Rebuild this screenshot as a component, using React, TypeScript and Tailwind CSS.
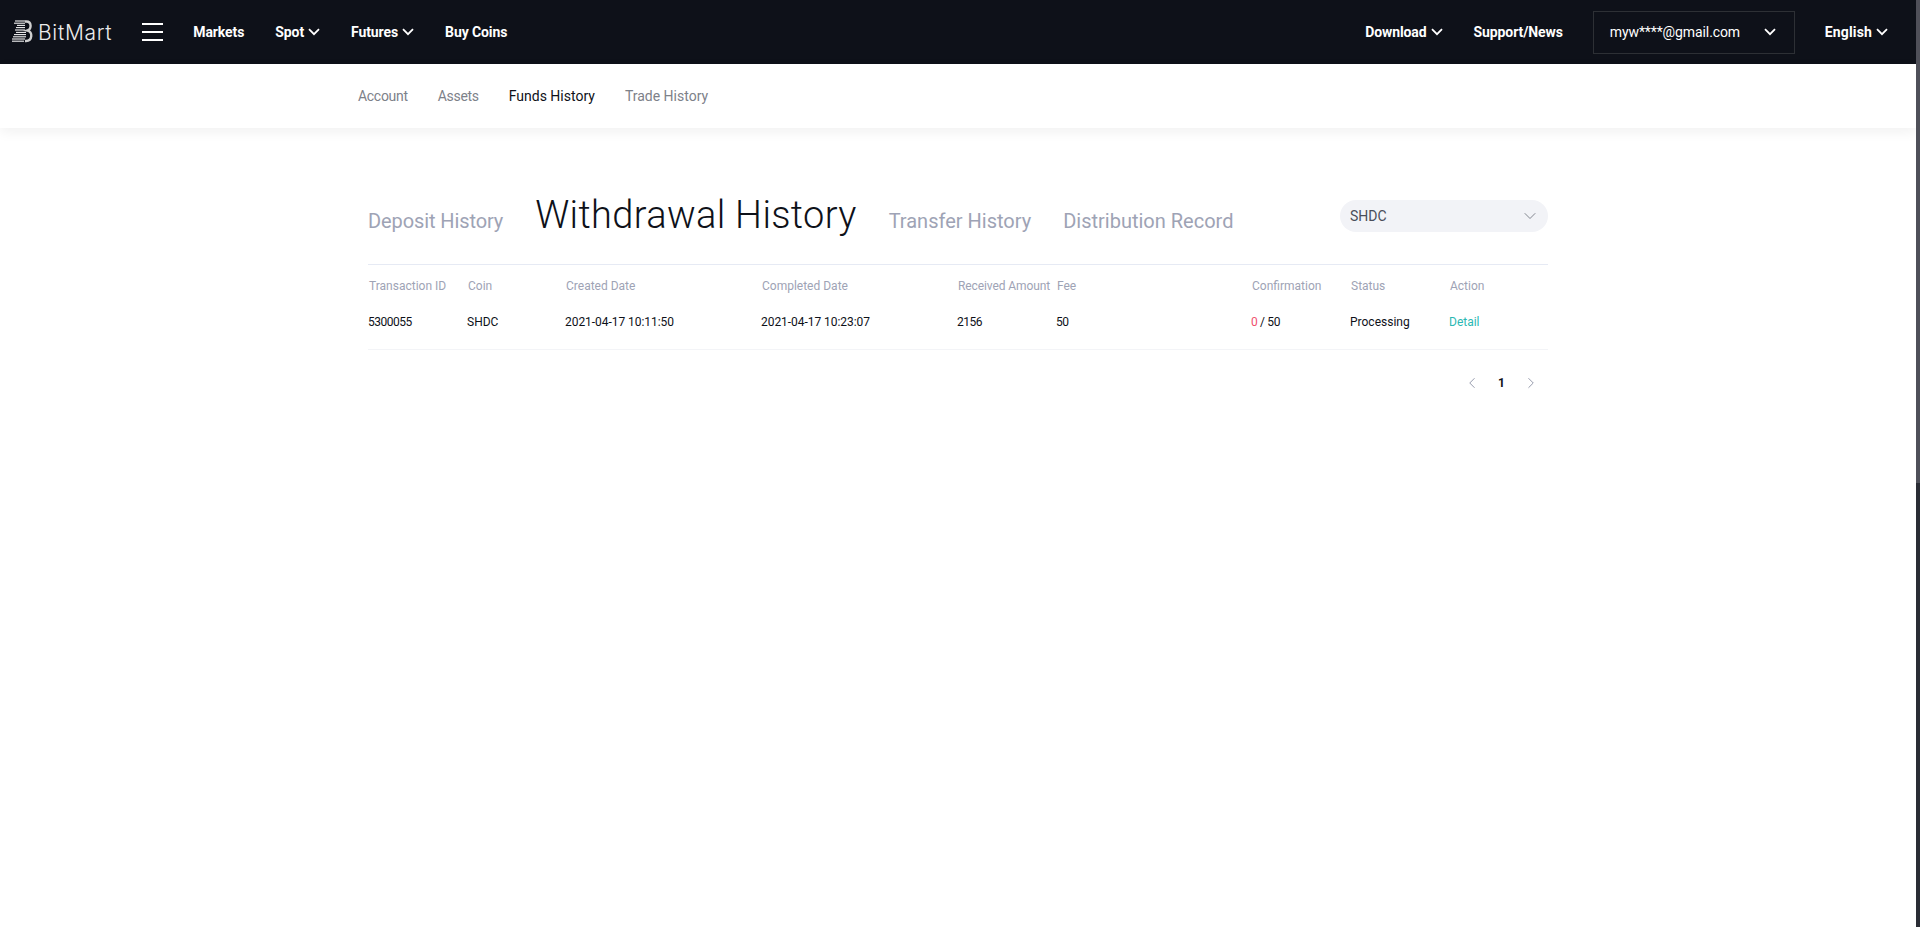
import React from "react";
import { ChevronDown, ChevronLeft, ChevronRight } from "lucide-react";

const Logo = () => (
  <svg width="22" height="24" viewBox="0 0 22 24" fill="none" className="shrink-0">
    <g stroke="#f2f2f2" strokeWidth="1.1">
      <path d="M3 1h10" />
      <path d="M2 3.200h11" />
      <path d="M5 5.400h8" />
      <path d="M4 7.600h9" />
      <path d="M3 10h10" />
      <path d="M4 12.400h10" />
      <path d="M2 14.600h12" />
      <path d="M1 16.800h13" />
      <path d="M0 19h13" />
      <path d="M0 21.200h12" />
    </g>
    <path d="M13 1.500h1.500c5 0 5.500 7.500 1 9c5.500 1.200 5 10.500-1.500 10.500h-1" stroke="#cfcfcf" strokeWidth="2.400" />
  </svg>
);

const Chevron = () => (
  <svg width="12" height="8" viewBox="0 0 12 8" fill="none" className="shrink-0">
    <path d="M1 1.200l5 5l5-5" stroke="#ffffff" strokeWidth="1.800" />
  </svg>
);

const NavItem = ({ label, chevron, t }: { label: string; chevron?: boolean; t?: string }) => (
  <span className={`flex items-center gap-[4px] text-[14px] font-bold text-white whitespace-nowrap ${t ?? "tracking-[-0.1px]"}`}>
    {label}
    {chevron && <Chevron />}
  </span>
);

const cols = [
  { w: "w-[99px]", h: "Transaction ID", v: "5300055", t: "tracking-[-0.5px]" },
  { w: "w-[98px]", h: "Coin", v: "SHDC", t: "" },
  { w: "w-[196px]", h: "Created Date", v: "2021-04-17 10:11:50", t: "tracking-[-0.05px]" },
  { w: "w-[196px]", h: "Completed Date", v: "2021-04-17 10:23:07", t: "tracking-[-0.05px]" },
  { w: "w-[99px]", h: "Received Amount", v: "2156", t: "tracking-[-0.5px]" },
  { w: "w-[195px]", h: "Fee", v: "50", t: "tracking-[-0.5px]" },
  { w: "w-[99px]", h: "Confirmation", v: "", t: "tracking-[-0.35px]" },
  { w: "w-[99px]", h: "Status", v: "Processing", t: "" },
  { w: "w-[99px]", h: "Action", v: "", t: "" },
];

export default function App() {
  return (
    <div className="flex h-[927px] overflow-hidden bg-white font-['Roboto','Liberation_Sans',sans-serif]">
      <div className="flex-1 min-w-0">
        <header className="h-16 bg-[#0e1119] flex items-center justify-between pl-3 pr-[28px]">
          <div className="flex items-center">
            <div className="flex items-center gap-[4px]">
              <Logo />
              <span className="text-[21px] font-light font-['Inter',sans-serif] text-[#ececec] leading-none tracking-[0.7px]">BitMart</span>
            </div>
            <div className="ml-[30px] w-[21px] flex flex-col gap-[6px]">
              <span className="h-[2px] bg-white" />
              <span className="h-[2px] bg-white" />
              <span className="h-[2px] bg-white" />
            </div>
            <div className="ml-[30px] flex items-center gap-[31px]">
              <NavItem label="Markets" />
              <NavItem label="Spot" chevron />
              <NavItem label="Futures" chevron />
              <NavItem label="Buy Coins" />
            </div>
          </div>
          <div className="flex items-center">
            <NavItem label="Download" chevron />
            <span className="ml-[31px]"><NavItem label="Support/News" /></span>
            <div className="ml-[30px] w-[202px] h-[43px] border border-[#2d3035] flex items-center justify-between pl-[16px] pr-[18px] text-[14px] text-white">
              <span className="tracking-[-0.1px] pt-px">myw****@gmail.com</span>
              <Chevron />
            </div>
            <span className="ml-[30px]"><NavItem label="English" chevron t="tracking-[0.15px]" /></span>
          </div>
        </header>
        <nav className="h-16 bg-white flex items-center gap-[30px] pl-[358px] text-[14px] text-[#7d8189] shadow-[0_4px_12px_rgba(0,0,0,0.06)]">
          <span className="tracking-[-0.3px]">Account</span>
          <span className="tracking-[-0.3px]">Assets</span>
          <span className="text-[#0e1119]">Funds History</span>
          <span>Trade History</span>
        </nav>
        <main className="w-[1180px] ml-[368px] pt-[63px]">
          <div className="flex items-start justify-between border-b border-[#e6eaf4] h-[74px]">
            <div className="flex items-baseline text-[20px] text-[#9ea3b5]">
              <span className="tracking-[-0.1px]">Deposit History</span>
              <span className="ml-[32px] text-[38px] font-light tracking-[0.35px] text-[#0e1119] leading-[48px]">Withdrawal History</span>
              <span className="ml-[32px]">Transfer History</span>
              <span className="ml-[32px]">Distribution Record</span>
            </div>
            <div className="mt-[9px] w-[208px] h-8 rounded-full bg-[#f2f3f7] flex items-center justify-between pl-[10px] pr-[8px] text-[14px] text-[#4a4e5a]">
              <span>SHDC</span>
              <ChevronDown size={20} strokeWidth={1} className="text-[#6b6f7a]" />
            </div>
          </div>
          <div className="flex h-[41px] items-center text-[12px] text-[#9ea3b5]">
            {cols.map((c) => (
              <div key={c.h} className={`${c.w} pl-px whitespace-nowrap ${c.h === "Received Amount" ? "tracking-[-0.1px]" : ""}`}>{c.h}</div>
            ))}
          </div>
          <div className="flex h-[44px] pb-3 items-center text-[12px] text-[#0e1119] border-b border-[#f3f4f7]">
            {cols.map((c) => (
              <div key={c.h} className={`${c.w} whitespace-nowrap ${c.t}`}>
                {c.h === "Confirmation" ? (
                  <span><span className="text-[#f0506e]">0</span> / 50</span>
                ) : c.h === "Action" ? (
                  <span className="text-[#2bb8b3]">Detail</span>
                ) : (
                  c.v
                )}
              </div>
            ))}
          </div>
          <div className="flex justify-end items-center h-[18px] mt-[24px] pr-[8px] gap-[17px]">
            <ChevronLeft size={18} strokeWidth={1.25} className="text-[#8f94a6]" />
            <span className="text-[12px] font-bold text-[#0e1119]">1</span>
            <ChevronRight size={18} strokeWidth={1.25} className="text-[#8f94a6]" />
          </div>
        </main>
      </div>
      <div className="w-1 shrink-0 flex flex-col bg-[#2a2d35]">
        <div className="h-[483px] bg-[#4f5059]" />
      </div>
    </div>
  );
}
